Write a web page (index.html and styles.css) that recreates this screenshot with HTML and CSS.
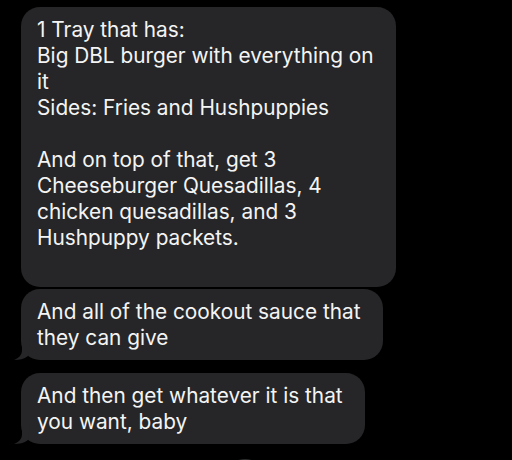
FILE: index.html
```html
<!DOCTYPE html>
<html lang="en">
<head>
<meta charset="utf-8">
<title>Messages</title>
<link rel="stylesheet" href="styles.css">
</head>
<body>
<main class="thread">
  <div class="bubble first">
    <p class="text">1 Tray that has:<br>Big DBL burger with everything on<br>it<br>Sides: Fries and Hushpuppies<br><br>And on top of that, get 3<br>Cheeseburger Quesadillas, 4<br>chicken quesadillas, and 3<br>Hushpuppy packets.<br>&nbsp;</p>
  </div>
  <div class="bubble tailed">
    <p class="text">And all of the cookout sauce that<br>they can give</p>
    <svg class="tail" width="16" height="22" viewBox="0 0 16 22" aria-hidden="true"><path d="M8 0 L8 12 C8 17 5 20 0 22 C5 22 10 21 14 18 L16 0 Z"/></svg>
  </div>
  <div class="bubble tailed spaced">
    <p class="text">And then get whatever it is that<br>you want, baby</p>
    <svg class="tail" width="16" height="22" viewBox="0 0 16 22" aria-hidden="true"><path d="M8 0 L8 12 C8 17 5 20 0 22 C5 22 10 21 14 18 L16 0 Z"/></svg>
  </div>
  <div class="avatar"></div>
</main>
</body>
</html>
```
FILE: styles.css
```css
html, body {
  margin: 0;
  padding: 0;
  background: #000;
}
body {
  width: 512px;
  height: 460px;
  overflow: hidden;
}
.thread {
  box-sizing: border-box;
  height: 460px;
  overflow: hidden;
  display: flex;
  flex-direction: column;
  align-items: flex-start;
  padding: 7px 0 0 21px;
  gap: 2px;
}
.bubble {
  position: relative;
  flex-shrink: 0;
  background: #262628;
  border-radius: 19px;
  padding: 10px 22px 9px 16px;
  color: #f4f4f4;
  font-family: Inter, "Noto Sans", sans-serif;
  font-size: 20.8px;
  line-height: 26px;
}
.bubble.first {
  padding-bottom: 10px;
}
.spaced {
  margin-top: 11px;
}
.text {
  margin: 0;
  white-space: nowrap;
}
.tail {
  position: absolute;
  left: -7px;
  bottom: 0;
  fill: #262628;
}
.avatar {
  flex-shrink: 0;
  margin: 13px 0 0 202px;
  width: 44px;
  height: 44px;
  border-radius: 50%;
  background: #2c2c2e;
}
```
